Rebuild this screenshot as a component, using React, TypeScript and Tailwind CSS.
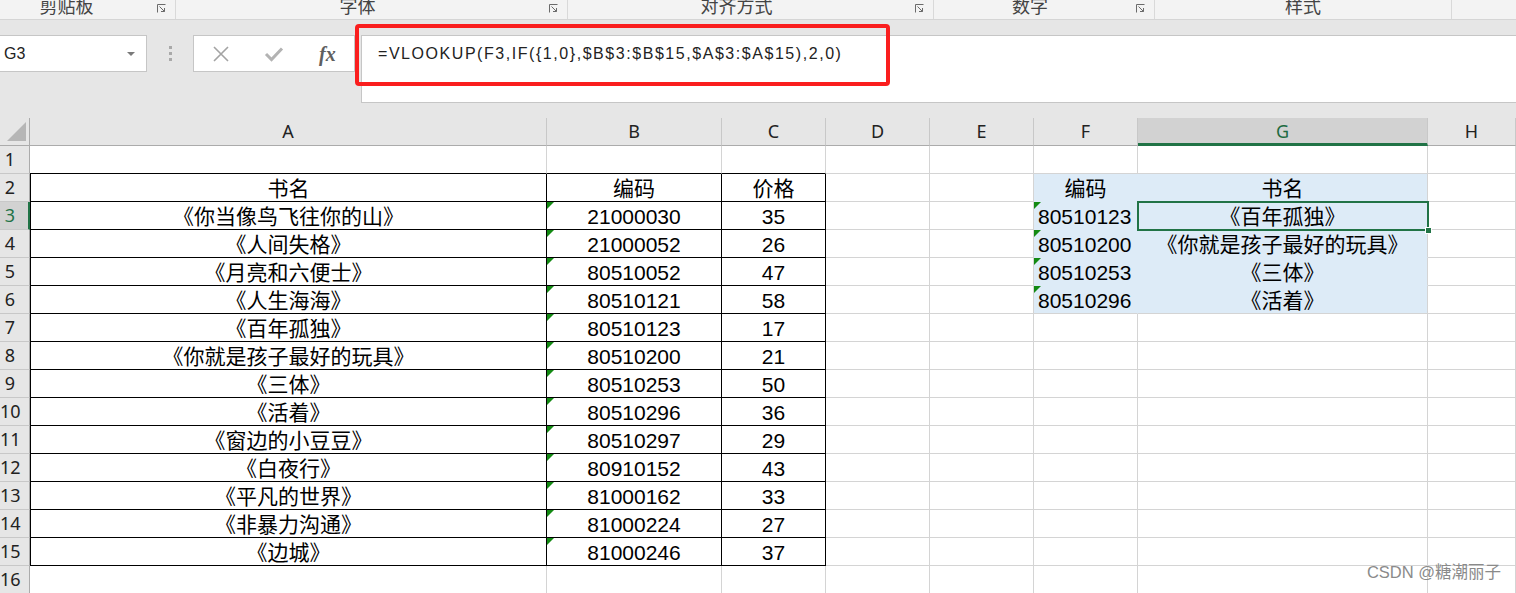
import React from 'react';

const SANS = "font-['Liberation_Sans','Noto_Sans_CJK_SC',sans-serif]";
const UI = "font-['Noto_Sans','Noto_Sans_CJK_SC',sans-serif]";

const COLS = ['A', 'B', 'C', 'D', 'E', 'F', 'G', 'H'];

// A2:C15
const books: [string, string, string][] = [
  ['书名', '编码', '价格'],
  ['《你当像鸟飞往你的山》', '21000030', '35'],
  ['《人间失格》', '21000052', '26'],
  ['《月亮和六便士》', '80510052', '47'],
  ['《人生海海》', '80510121', '58'],
  ['《百年孤独》', '80510123', '17'],
  ['《你就是孩子最好的玩具》', '80510200', '21'],
  ['《三体》', '80510253', '50'],
  ['《活着》', '80510296', '36'],
  ['《窗边的小豆豆》', '80510297', '29'],
  ['《白夜行》', '80910152', '43'],
  ['《平凡的世界》', '81000162', '33'],
  ['《非暴力沟通》', '81000224', '27'],
  ['《边城》', '81000246', '37'],
];

// F2:G6
const lookup: [string, string][] = [
  ['编码', '书名'],
  ['80510123', '《百年孤独》'],
  ['80510200', '《你就是孩子最好的玩具》'],
  ['80510253', '《三体》'],
  ['80510296', '《活着》'],
];

const groups = [
  { label: '剪贴板', w: 'w-[176px]', launcher: true, pad: 'pr-[14px]' },
  { label: '字体', w: 'w-[392px]', launcher: true, pad: '' },
  { label: '对齐方式', w: 'w-[366px]', launcher: true, pad: '' },
  { label: '数字', w: 'w-[221px]', launcher: true, pad: '' },
  { label: '样式', w: 'w-[297px]', launcher: false, pad: '' },
];

function Launcher() {
  return (
    <svg width="9" height="9" viewBox="0 0 9 9" fill="none" stroke="#6a6a6a" strokeWidth="1">
      <path d="M0.5 8.5V0.5H8.5" />
      <path d="M2.5 2.5L7.5 7.5" />
      <path d="M7.5 4V7.5H4" />
    </svg>
  );
}

function Triangle() {
  return (
    <div className="absolute left-0 top-0 h-0 w-0 border-t-[7px] border-r-[7px] border-t-[#138a13] border-r-transparent" />
  );
}

function cellText(r: number, c: number) {
  if (r >= 2 && r <= 15 && c <= 2) {
    const v = books[r - 2][c];
    const isNum = /^\d+$/.test(v);
    return { text: v, num: isNum, left: false, tri: c === 1 && r >= 3 };
  }
  if (r >= 2 && r <= 6 && (c === 5 || c === 6)) {
    const v = lookup[r - 2][c - 5];
    const isNum = /^\d+$/.test(v);
    return { text: v, num: isNum, left: c === 5 && r >= 3, tri: c === 5 && r >= 3 };
  }
  return null;
}

function Cell({ r, c }: { r: number; c: number }) {
  const inTable = r >= 2 && r <= 15 && c <= 2;
  const blue = r >= 2 && r <= 6 && (c === 5 || c === 6);
  const right = inTable
    ? 'border-r-black'
    : blue && c === 5
      ? 'border-r-[#ddebf7]'
      : 'border-r-[#d4d4d4]';
  const bottom =
    inTable || (r === 1 && c <= 2)
      ? 'border-b-black'
      : blue && r < 6
        ? 'border-b-[#ddebf7]'
        : 'border-b-[#d4d4d4]';
  const left = inTable && c === 0 ? 'border-l border-l-black' : '';
  const bg = blue ? 'bg-[#ddebf7]' : 'bg-white';
  const data = cellText(r, c);
  const selected = r === 3 && c === 6;

  return (
    <div
      className={`relative flex items-center border-r border-b ${right} ${bottom} ${left} ${bg} ${
        data?.left ? 'justify-start pl-[4px]' : 'justify-center'
      }`}
    >
      {data?.tri && <Triangle />}
      {data && (
        <span
          className={`${SANS} whitespace-nowrap pt-[2px] leading-none text-black ${
            data.num ? 'text-[21px]' : 'text-[21px]'
          }`}
        >
          {data.text}
        </span>
      )}
      {selected && (
        <div className="absolute -left-[1px] -top-[1px] -right-[2px] -bottom-[2px] z-10 border-2 border-[#217346]">
          <div className="absolute -right-[5px] -bottom-[5px] h-[7px] w-[7px] border border-white bg-[#217346]" />
        </div>
      )}
    </div>
  );
}

export default function App() {
  const rows = Array.from({ length: 16 }, (_, i) => i + 1);

  return (
    <div className="relative h-[593px] w-[1516px] overflow-hidden bg-[#e6e6e6]">
      {/* Ribbon group labels (clipped) */}
      <div className="flex h-[20px] overflow-hidden border-b border-[#d5d5d5] bg-[#f3f3f3]">
        {groups.map((g) => (
          <div key={g.label} className={`flex h-full shrink-0 border-r border-[#d9d9d9] ${g.w}`}>
            <div
              className={`${UI} -mt-[3px] flex-1 text-center text-[18px] leading-none text-[#444] ${g.pad}`}
            >
              {g.label}
            </div>
            {g.launcher && (
              <div className="flex w-[28px] items-start justify-center pt-[4px]">
                <Launcher />
              </div>
            )}
          </div>
        ))}
      </div>

      {/* Formula bar */}
      <div className="flex h-[98px] items-start pt-[15px]">
        <div className="flex h-[37px] w-[147px] items-center justify-between border border-l-0 border-[#c6c6c6] bg-white pl-[4px] pr-[11px]">
          <span className={`${SANS} text-[16px] text-[#222]`}>G3</span>
          <div className="h-0 w-0 border-x-[4px] border-t-[4px] border-x-transparent border-t-[#7a7a7a]" />
        </div>
        <div className="flex h-[37px] w-[46px] flex-col items-center justify-center gap-[3px]">
          <div className="h-[3px] w-[3px] bg-[#a9a9a9]" />
          <div className="h-[3px] w-[3px] bg-[#a9a9a9]" />
          <div className="h-[3px] w-[3px] bg-[#a9a9a9]" />
        </div>
        <div className="flex h-[37px] w-[162px] items-center border border-[#c6c6c6] bg-white">
          <div className="flex w-[54px] justify-center">
            <svg width="18" height="18" viewBox="0 0 18 18" stroke="#a3a3a3" strokeWidth="1.6">
              <path d="M2 2L16 16M16 2L2 16" />
            </svg>
          </div>
          <div className="flex w-[54px] justify-center">
            <svg width="20" height="16" viewBox="0 0 20 16" fill="none" stroke="#b3b3b3" strokeWidth="3">
              <path d="M2 8L7.5 13.5L18 2.5" />
            </svg>
          </div>
          <div className="flex w-[54px] justify-center">
            <span className="font-['Liberation_Serif',serif] text-[20px] font-bold italic leading-none text-[#5f5f5f]">
              fx
            </span>
          </div>
        </div>
        <div className="ml-[6px] h-[68px] flex-1 border border-r-0 border-[#c6c6c6] bg-white pl-[16px]">
          <div className={`${SANS} text-[16px] leading-[36px] tracking-[1.55px] text-[#222]`}>
            =VLOOKUP(F3,IF({'{'}1,0{'}'},$B$3:$B$15,$A$3:$A$15),2,0)
          </div>
        </div>
      </div>

      {/* Annotation box */}
      <div className="absolute left-[355px] top-[24px] h-[62px] w-[535px] rounded-[4px] border-4 border-[#fa1e1e]" />

      {/* Sheet */}
      <div className="grid auto-rows-[28px] grid-cols-[30px_517px_175px_104px_104px_104px_104px_290px_1fr]">
        <div className="relative border-r border-b border-r-[#ababab] border-b-[#ababab] bg-[#e6e6e6]">
          <svg className="absolute left-0 top-0" width="30" height="28" viewBox="0 0 30 28">
            <polygon points="26,4 26,23 7,23" fill="#b6b6b6" />
          </svg>
        </div>
        {COLS.map((c) =>
          c === 'G' ? (
            <div
              key={c}
              className={`${UI} flex items-center justify-center border-r border-b-[3px] border-r-[#c8c8c8] border-b-[#217346] bg-[#d2d2d2] pt-[2px] text-[18px] text-[#1e6b41]`}
            >
              {c}
            </div>
          ) : (
            <div
              key={c}
              className={`${UI} flex items-center justify-center border-r border-b border-r-[#c8c8c8] border-b-[#ababab] bg-[#e6e6e6] text-[18px] text-[#222]`}
            >
              {c}
            </div>
          )
        )}

        {rows.map((r) => (
          <React.Fragment key={r}>
            {r === 3 ? (
              <div className="flex items-center overflow-hidden border-r-2 border-b border-r-[#217346] border-b-[#c8c8c8] bg-[#d2d2d2]">
                <div className={`${UI} w-[20px] shrink-0 text-center text-[18px] text-[#217346]`}>{r}</div>
              </div>
            ) : (
              <div className="flex items-center overflow-hidden border-r border-b border-r-[#ababab] border-b-[#c8c8c8] bg-[#e6e6e6]">
                <div className={`${UI} w-[20px] shrink-0 text-center text-[18px] text-[#222]`}>{r}</div>
              </div>
            )}
            {COLS.map((_, c) => (
              <Cell key={c} r={r} c={c} />
            ))}
          </React.Fragment>
        ))}
      </div>

      {/* Watermark */}
      <div className={`${SANS} absolute bottom-[8px] right-[15px] text-[16.5px] text-[#8a8a8a]`}>
        CSDN @糖潮丽子
      </div>
    </div>
  );
}
